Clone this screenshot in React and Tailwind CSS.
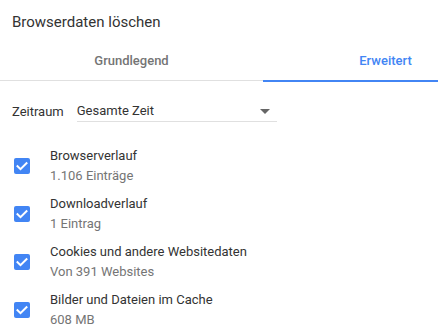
import React from "react";

function Check() {
  return (
    <div className="w-4 h-4 rounded-[2px] bg-[#4285f4] flex items-center justify-center shrink-0">
      <svg width="16" height="16" viewBox="0 0 16 16" fill="none">
        <polyline points="3.5 8.2 6.5 11.2 12.5 5.2" stroke="white" strokeWidth="2" strokeLinecap="square" />
      </svg>
    </div>
  );
}

const items = [
  ["Browserverlauf", "1.106 Einträge"],
  ["Downloadverlauf", "1 Eintrag"],
  ["Cookies und andere Websitedaten", "Von 391 Websites"],
  ["Bilder und Dateien im Cache", "608 MB"],
];

export default function App() {
  return (
    <div className="w-[438px] h-[332px] bg-white overflow-hidden font-['Roboto',sans-serif] text-[13px] leading-5">
      <div className="pt-3 pl-3 text-[15px] leading-5 text-[#333]">Browserdaten löschen</div>
      <div className="flex h-[49px] border-b border-[#e0e0e0]">
        <div className="w-[263px] text-center pt-[19px] font-medium text-[#757575]">Grundlegend</div>
        <div className="flex-1 text-center pl-[70px] pt-[19px] font-medium text-[#4285f4] border-b-2 border-[#4285f4] h-[50px]">
          Erweitert
        </div>
      </div>
      <div className="flex items-center pl-3 mt-5">
        <div className="text-[#333]">Zeitraum</div>
        <div className="ml-[13px] w-[200px] flex items-center justify-between border-b border-[#e0e0e0] pr-[7px]">
          <span className="text-[#333]">Gesamte Zeit</span>
          <div className="w-0 h-0 border-l-[5px] border-r-[5px] border-t-[5px] border-l-transparent border-r-transparent border-t-[#666]" />
        </div>
      </div>
      <div className="mt-6 flex flex-col gap-2">
        {items.map(([a, b]) => (
          <div key={a} className="flex items-center pl-[14px] gap-5">
            <Check />
            <div>
              <div className="text-[#333]">{a}</div>
              <div className="text-[#757575]">{b}</div>
            </div>
          </div>
        ))}
      </div>
    </div>
  );
}
